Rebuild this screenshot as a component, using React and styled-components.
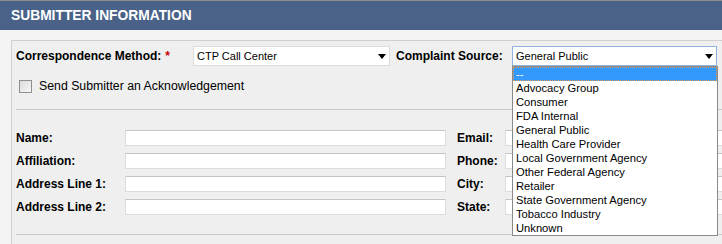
import styled, { createGlobalStyle } from 'styled-components';

const GlobalStyle = createGlobalStyle`
  body {
    margin: 0;
    background: #f4f4f4;
    font-family: "Liberation Sans", Arial, sans-serif;
    font-size: 12px;
    color: #000;
    overflow: hidden;
  }
`;

const Header = styled.div`
  height: 29px;
  line-height: 30px;
  border-top: 1px solid #8c8c8c;
  background: #4a6287;
  color: #fff;
  font-size: 13.8px;
  font-weight: bold;
  padding-left: 11px;
`;

const Body = styled.div`
  padding: 10px 0 0 11px;
`;

const Panel = styled.div`
  background: #efefef;
  border-left: 1px solid #cfcfcf;
  border-top: 1px solid #cfcfcf;
  padding: 5px 0 0 4px;
  height: 198px;
`;

const TopRow = styled.div`
  display: grid;
  grid-template-columns: 177px 197px 122px 205px;
  align-items: center;
  height: 20px;

  & > :nth-child(3) {
    padding-left: 6px;
  }
`;

const Label = styled.label`
  font-weight: bold;
  font-size: 12px;
  white-space: nowrap;
`;

const Required = styled.span`
  color: #cc0000;
  margin-left: 4px;
`;

const SelectBox = styled.div`
  position: relative;
  height: 18px;
  background: #fff;
  border: 1px solid ${(p) => (p.$focused ? '#8fb3dc' : '#dcdcdc')};
  display: flex;
  align-items: center;
  padding-left: 3px;
  font-size: 11px;
`;

const Arrow = styled.span`
  position: absolute;
  right: 3px;
  top: 7px;
  width: 0;
  height: 0;
  border-left: 4.5px solid transparent;
  border-right: 4.5px solid transparent;
  border-top: 5px solid #000;
`;

const DropList = styled.ul`
  position: absolute;
  left: -1px;
  top: 19px;
  width: 204px;
  margin: 0;
  padding: 0;
  list-style: none;
  background: #fff;
  border: 1px solid #8a8a8a;
  z-index: 10;
`;

const Option = styled.li`
  height: ${(p) => (p.$active ? '12px' : '14px')};
  line-height: ${(p) => (p.$active ? '12px' : '14px')};
  padding-left: 2px;
  font-size: 11.2px;
  color: ${(p) => (p.$active ? '#fff' : '#000')};
  background: ${(p) => (p.$active ? '#3399ff' : '#fff')};
  border: ${(p) => (p.$active ? '1px dotted #e59a4f' : 'none')};
  margin-left: ${(p) => (p.$active ? '0' : '1px')};
`;

const CheckRow = styled.div`
  display: flex;
  align-items: center;
  margin: 13px 0 0 3px;
  gap: 7px;
  height: 14px;
  font-size: 12.3px;
`;

const CheckBox = styled.span`
  width: 11px;
  height: 11px;
  border: 1px solid #8e8f8f;
  background: linear-gradient(135deg, #dcdcdc, #f6f6f6);
`;

const Divider = styled.div`
  height: 1px;
  background: #c9c9c9;
  margin-top: ${(p) => p.$top}px;
`;

const Fields = styled.div`
  display: grid;
  grid-template-columns: 109px 321px 59px 220px;
  row-gap: 7px;
  align-items: center;
  padding: 20px 0 19px;

  & > :nth-child(4n + 3) {
    padding-left: 11px;
  }
`;

const TextInput = styled.div`
  height: 14px;
  background: #fff;
  border: 1px solid #dcdcdc;
  border-top-color: #c4c4c4;
  font-size: 11px;
  line-height: 14px;
  padding-left: 3px;
`;

const sources = [
  'Advocacy Group',
  'Consumer',
  'FDA Internal',
  'General Public',
  'Health Care Provider',
  'Local Government Agency',
  'Other Federal Agency',
  'Retailer',
  'State Government Agency',
  'Tobacco Industry',
  'Unknown',
];

const rows = [
  ['Name:', 'Email:'],
  ['Affiliation:', 'Phone:'],
  ['Address Line 1:', 'City:'],
  ['Address Line 2:', 'State:'],
];

export default function App() {
  return (
    <>
      <GlobalStyle />
      <Header>SUBMITTER INFORMATION</Header>
      <Body>
        <Panel>
          <TopRow>
            <Label>
              Correspondence Method:<Required>*</Required>
            </Label>
            <SelectBox>
              CTP Call Center
              <Arrow />
            </SelectBox>
            <Label>Complaint Source:</Label>
            <SelectBox $focused>
              General Public
              <Arrow />
              <DropList>
                <Option $active>--</Option>
                {sources.map((s) => (
                  <Option key={s}>{s}</Option>
                ))}
              </DropList>
            </SelectBox>
          </TopRow>
          <CheckRow>
            <CheckBox />
            Send Submitter an Acknowledgement
          </CheckRow>
          <Divider $top={16} />
          <Fields>
            {rows.map(([a, b]) => [
              <Label key={a}>{a}</Label>,
              <TextInput key={a + 'i'} />,
              <Label key={b}>{b}</Label>,
              <TextInput key={b + 'i'} />,
            ])}
          </Fields>
          <Divider $top={0} />
        </Panel>
      </Body>
    </>
  );
}
